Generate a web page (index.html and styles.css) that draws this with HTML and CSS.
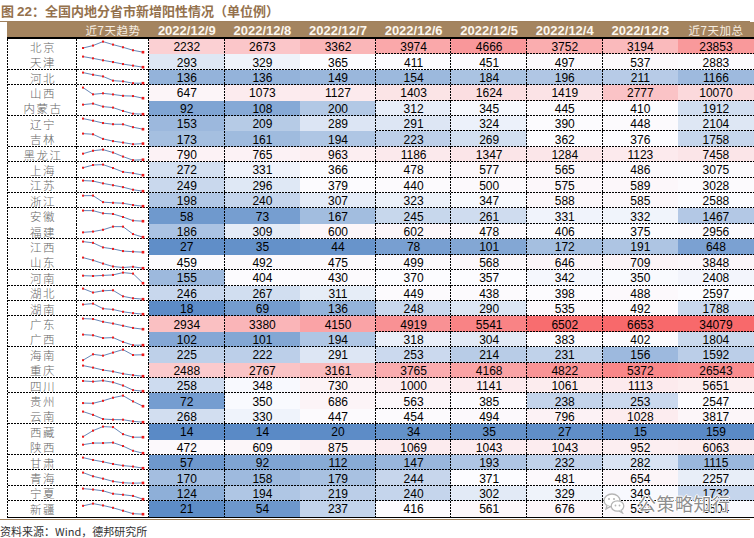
FILE: index.html
```html
<!DOCTYPE html>
<html lang="zh-CN">
<head>
<meta charset="utf-8">
<title>全国内地分省市新增阳性情况</title>
<link rel="stylesheet" href="styles.css">
</head>
<body>
<div class="page">
  <div class="title">图 <span class="num">22</span>：全国内地分省市新增阳性情况（单位例）</div>
  <div class="rule"></div>
  <div class="table">
    <div class="head">
      <div class="hc"></div>
      <div class="hc hk">近7天趋势</div>
      <div class="hc">2022/12/9</div>
      <div class="hc">2022/12/8</div>
      <div class="hc">2022/12/7</div>
      <div class="hc">2022/12/6</div>
      <div class="hc">2022/12/5</div>
      <div class="hc">2022/12/4</div>
      <div class="hc">2022/12/3</div>
      <div class="hc hk">近7天加总</div>
    </div>
    <div class="rows" id="rows"></div>
  </div>
  <div class="rule rule-b"></div>
  <div class="source">资料来源：Wind，德邦研究所</div>
  <div class="wm">
    <svg class="wm-icon" width="22" height="22" viewBox="0 0 22 22">
      <ellipse cx="9" cy="8.5" rx="8" ry="6.5" fill="#fff" stroke="#b5b5b5" stroke-width="1.3"/>
      <path d="M4 13.5 L3 17 L7 14.6" fill="#fff" stroke="#b5b5b5" stroke-width="1.3"/>
      <ellipse cx="14.5" cy="14" rx="6.3" ry="5.2" fill="#fff" stroke="#b5b5b5" stroke-width="1.3"/>
      <path d="M18 18.3 L19.5 21 L16 19" fill="#fff" stroke="#b5b5b5" stroke-width="1.3"/>
      <circle cx="6" cy="7" r="1" fill="#b5b5b5"/>
      <circle cx="11" cy="7" r="1" fill="#b5b5b5"/>
      <circle cx="12.5" cy="13.5" r="0.9" fill="#b5b5b5"/>
      <circle cx="16.5" cy="13.5" r="0.9" fill="#b5b5b5"/>
    </svg>
    <span class="wm-text">公策略知行</span>
  </div>
</div>
<script src="script.js"></script>
</body>
</html>
```

FILE: styles.css
```css
* { box-sizing: border-box; }
html, body { margin: 0; padding: 0; background: #fff; }
:root {
  --dh: repeating-linear-gradient(90deg, #000 0 2px, transparent 2px 3px);
  --dv: repeating-linear-gradient(180deg, #000 0 2px, transparent 2px 3px);
}
.page {
  position: relative;
  width: 754px;
  height: 538px;
  overflow: hidden;
  font-family: "Liberation Sans", "Noto Sans CJK SC", sans-serif;
}
.title {
  height: 21px;
  line-height: 21px;
  padding-left: 1px;
  font-family: "Noto Sans CJK SC", sans-serif;
  font-weight: 700;
  font-size: 13px;
  color: #94714d;
  white-space: nowrap;
}
.title .num { font-family: "Liberation Sans", sans-serif; font-size: 13.5px; }
.rule { height: 1px; width: 750px; background: #a0805c; }
.rule-b { margin-top: 1px; }
.table { margin-left: 7px; width: 747px; }
.head {
  display: grid;
  grid-template-columns: 70px 72px repeat(8, 75.6px);
  height: 17px;
  background: #a4845f;
  border-bottom: 2px solid #000;
}
.hc {
  display: flex;
  align-items: center;
  justify-content: center;
  color: #fcf7ef;
  font-weight: 700;
  font-size: 13px;
  white-space: nowrap;
}
.hk {
  font-family: "Noto Sans CJK SC", sans-serif;
  font-weight: 400;
  font-size: 11.5px;
  letter-spacing: 0.5px;
  color: #f6eee2;
}
.rows {
  display: grid;
  grid-template-columns: 69px 72px repeat(8, 75.6px);
  grid-auto-rows: 15.42px;
  width: 747px;
  padding-left: 1px;
  border-bottom: 1px solid #000;
  background: var(--dv) left top / 1px 100% no-repeat;
}
.c {
  display: flex;
  align-items: center;
  justify-content: center;
  font-size: 12px;
  color: #000;
  padding-top: 1px;
  white-space: nowrap;
}
.nm {
  font-family: "Noto Sans CJK SC", sans-serif;
  font-size: 11.5px;
  font-weight: 300;
  color: #666;
  letter-spacing: 1.5px;
  padding-left: 1px;
  padding-top: 0;
}
.tr { padding-top: 0; align-items: stretch; justify-content: flex-start; }
.tr svg { display: block; }
.lb { background: var(--dh) left bottom / 100% 1px no-repeat; }
.lr { background: var(--dv) right top / 1px 100% no-repeat; }
.lb.lr {
  background: var(--dh) left bottom / 100% 1px no-repeat,
              var(--dv) right top / 1px 100% no-repeat;
}
.source {
  padding-top: 3px;
  height: 18px;
  line-height: 16px;
  font-family: "Noto Sans CJK SC", sans-serif;
  font-size: 11px;
  color: #333;
  white-space: nowrap;
}
.wm {
  position: absolute;
  left: 603px;
  top: 490px;
  display: flex;
  align-items: center;
  gap: 13px;
}
.wm-icon { display: block; }
.wm-text {
  font-family: "Noto Sans CJK SC", sans-serif;
  font-size: 18px;
  color: rgba(120, 120, 120, 0.85);
  letter-spacing: 0.5px;
  text-shadow: 0 0 1px #fff, 1px 0 0 #fff, -1px 0 0 #fff, 0 1px 0 #fff, 0 -1px 0 #fff;
}
```

FILE: script.js
```js
(function () {
  var data = [
    ["北京", [2232, 2673, 3362, 3974, 4666, 3752, 3194], 23853],
    ["天津", [293, 329, 365, 411, 451, 497, 537], 2883],
    ["河北", [136, 136, 149, 154, 184, 196, 211], 1166],
    ["山西", [647, 1073, 1127, 1403, 1624, 1419, 2777], 10070],
    ["内蒙古", [92, 108, 200, 312, 345, 445, 410], 1912],
    ["辽宁", [153, 209, 289, 291, 324, 390, 448], 2104],
    ["吉林", [173, 161, 194, 223, 269, 362, 376], 1758],
    ["黑龙江", [790, 765, 963, 1186, 1347, 1284, 1123], 7458],
    ["上海", [272, 331, 366, 478, 577, 565, 486], 3075],
    ["江苏", [249, 296, 379, 440, 500, 575, 589], 3028],
    ["浙江", [198, 240, 307, 323, 347, 588, 585], 2588],
    ["安徽", [58, 73, 167, 245, 261, 331, 332], 1467],
    ["福建", [186, 309, 600, 602, 478, 406, 375], 2956],
    ["江西", [27, 35, 44, 78, 101, 172, 191], 648],
    ["山东", [459, 492, 475, 499, 568, 646, 709], 3848],
    ["河南", [155, 404, 430, 370, 357, 342, 350], 2408],
    ["湖北", [246, 267, 311, 449, 438, 398, 488], 2597],
    ["湖南", [18, 69, 136, 248, 290, 535, 492], 1788],
    ["广东", [2934, 3380, 4150, 4919, 5541, 6502, 6653], 34079],
    ["广西", [102, 101, 194, 318, 304, 383, 402], 1804],
    ["海南", [225, 222, 291, 253, 214, 231, 156], 1592],
    ["重庆", [2488, 2767, 3161, 3765, 4168, 4822, 5372], 26543],
    ["四川", [258, 348, 730, 1000, 1141, 1061, 1113], 5651],
    ["贵州", [72, 350, 686, 563, 385, 238, 253], 2547],
    ["云南", [268, 330, 447, 454, 494, 796, 1028], 3817],
    ["西藏", [14, 14, 20, 34, 35, 27, 15], 159],
    ["陕西", [472, 609, 875, 1069, 1043, 1043, 952], 6063],
    ["甘肃", [57, 92, 112, 147, 193, 232, 282], 1115],
    ["青海", [170, 158, 179, 244, 371, 481, 654], 2257],
    ["宁夏", [124, 194, 219, 240, 302, 329, 349], 1732],
    ["新疆", [21, 54, 237, 416, 561, 676, 539], 2504]
  ];
  var pairFirst = { "北京": 1, "山西": 1, "辽宁": 1, "安徽": 1, "江西": 1, "广东": 1, "海南": 1, "贵州": 1, "西藏": 1 };
  var vLine = [true, false, true, true, true, true, false, false];

  var MINC = [90, 138, 198], MIDC = [252, 252, 255], MAXC = [248, 105, 107];
  function scale(vals) {
    var s = vals.slice().sort(function (a, b) { return a - b; });
    var n = s.length, p = (n - 1) * 0.5, lo = Math.floor(p), hi = Math.ceil(p);
    return { min: s[0], mid: s[lo] + (s[hi] - s[lo]) * (p - lo), max: s[n - 1] };
  }
  function color(v, sc) {
    var a, b, t;
    if (v <= sc.mid) { a = MINC; b = MIDC; t = (v - sc.min) / ((sc.mid - sc.min) || 1); }
    else { a = MIDC; b = MAXC; t = (v - sc.mid) / ((sc.max - sc.mid) || 1); }
    var c = a.map(function (x, i) { return Math.round(x + (b[i] - x) * t); });
    return "rgb(" + c.join(",") + ")";
  }
  var all = [], totals = [];
  data.forEach(function (r) { all = all.concat(r[1]); totals.push(r[2]); });
  var scDay = scale(all), scTot = scale(totals);

  var NS = "http://www.w3.org/2000/svg";
  function spark(vals) {
    var ch = vals.slice().reverse();
    var mn = Math.min.apply(null, ch), mx = Math.max.apply(null, ch);
    var svg = document.createElementNS(NS, "svg");
    svg.setAttribute("width", "72");
    svg.setAttribute("height", "15.4");
    svg.setAttribute("viewBox", "0 0 72 15.4");
    var pts = ch.map(function (v, i) {
      return [6 + i * 10, 2.6 + (mx - v) / ((mx - mn) || 1) * 10.6];
    });
    var pl = document.createElementNS(NS, "polyline");
    pl.setAttribute("points", pts.map(function (p) { return p[0] + "," + p[1].toFixed(2); }).join(" "));
    pl.setAttribute("fill", "none");
    pl.setAttribute("stroke", "#5677ad");
    pl.setAttribute("stroke-width", "0.9");
    svg.appendChild(pl);
    pts.forEach(function (p, i) {
      var s = i === pts.length - 1 ? 2.6 : 2;
      var r = document.createElementNS(NS, "rect");
      r.setAttribute("x", (p[0] - s / 2).toFixed(2));
      r.setAttribute("y", (p[1] - s / 2).toFixed(2));
      r.setAttribute("width", s);
      r.setAttribute("height", s);
      r.setAttribute("fill", "#f01818");
      svg.appendChild(r);
    });
    return svg;
  }

  var host = document.getElementById("rows");
  var frag = document.createDocumentFragment();
  data.forEach(function (r, ri) {
    var last = ri === data.length - 1;
    var groupLine = !last && !pairFirst[r[0]];
    var nm = document.createElement("div");
    nm.className = "c nm lr" + (groupLine ? " lb" : "");
    nm.textContent = r[0];
    frag.appendChild(nm);
    var tr = document.createElement("div");
    tr.className = "c tr lr" + (groupLine ? " lb" : "");
    tr.appendChild(spark(r[1]));
    frag.appendChild(tr);
    var vals = r[1].concat([r[2]]);
    vals.forEach(function (v, ci) {
      var d = document.createElement("div");
      var cls = "c";
      var h = !last && (ci >= 3 ? true : groupLine);
      if (h) cls += " lb";
      if (vLine[ci]) cls += " lr";
      d.className = cls;
      d.style.backgroundColor = color(v, ci === 7 ? scTot : scDay);
      d.textContent = v;
      frag.appendChild(d);
    });
  });
  host.appendChild(frag);
})();
```
